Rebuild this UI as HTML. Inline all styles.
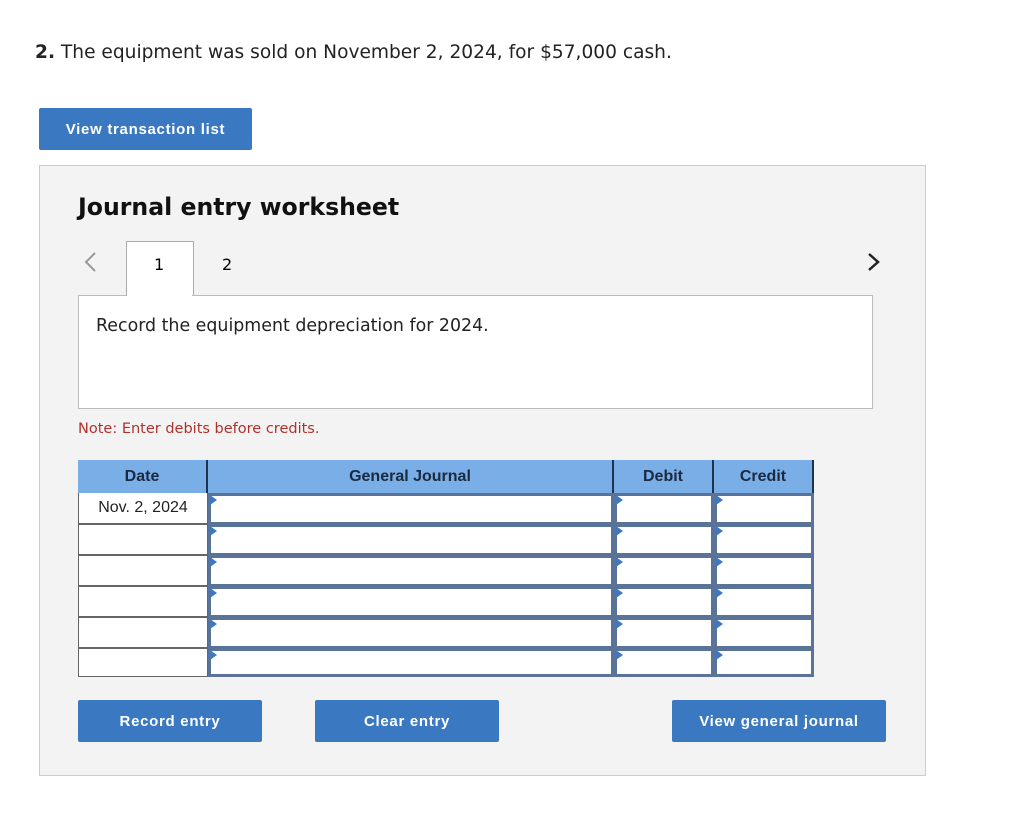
<!DOCTYPE html><html><head><style>
body{margin:0;width:1024px;height:816px;background:#fff;font-family:"Liberation Sans",sans-serif;position:relative;overflow:hidden}
.a{position:absolute}
.btn{position:absolute;background:#3a78c2;color:#fff;font-weight:bold;font-size:15px;letter-spacing:0.7px;display:flex;align-items:center;justify-content:center;border-radius:2px}
.cell{position:absolute;background:#fff;box-sizing:border-box}
.inp{position:absolute;background:#fff;box-sizing:border-box;border:3px solid #5a7399}
.tri{position:absolute;width:0;height:0;border-top:5px solid transparent;border-bottom:5px solid transparent;border-left:7px solid #3f78c0}
.h{position:absolute;background:#7aaee6;color:#1a2a40;font-weight:bold;font-size:16px;display:flex;align-items:center;justify-content:center;box-sizing:border-box;border-right:2px solid #1d3350;top:460px;height:33px}
.dv{font-family:"DejaVu Sans",sans-serif}
</style></head><body>
<div class="a dv" style="left:35px;top:42px;font-size:18.6px;color:#222"><b>2.</b> The equipment was sold on November 2, 2024, for $57,000 cash.</div>
<div class="btn" style="left:39px;top:108px;width:213px;height:42px">View transaction list</div>
<div class="a" style="left:39px;top:165px;width:885px;height:609px;background:#f3f3f3;border:1px solid #ccc"></div>
<div class="a dv" style="left:78px;top:193px;font-size:23.6px;font-weight:bold;color:#111">Journal entry worksheet</div>
<svg class="a" style="left:82px;top:251px" width="16" height="22"><path d="M13 2 L4 11 L13 20" fill="none" stroke="#999" stroke-width="2"/></svg>
<svg class="a" style="left:866px;top:252px" width="16" height="20"><path d="M3 2 L12 10 L3 18" fill="none" stroke="#222" stroke-width="2.5"/></svg>
<div class="a" style="left:126px;top:241px;width:66px;height:60px;background:#fff;border:1px solid #aaa;border-bottom:none"></div>
<div class="a dv" style="left:154px;top:255px;font-size:16px">1</div>
<div class="a dv" style="left:222px;top:255px;font-size:16px">2</div>
<div class="a" style="left:78px;top:295px;width:793px;height:112px;background:#fff;border:1px solid #bbb"></div>
<div class="a" style="left:127px;top:294px;width:65px;height:3px;background:#fff"></div>
<div class="a dv" style="left:96px;top:316px;font-size:17.4px;color:#222">Record the equipment depreciation for 2024.</div>
<div class="a dv" style="left:78px;top:421px;font-size:14.5px;color:#b0312c">Note: Enter debits before credits.</div>
<div class="a" style="left:78px;top:460px;width:736px;height:217px;background:#666"></div>
<div class="h" style="left:78px;width:130px">Date</div>
<div class="h" style="left:208px;width:406px">General Journal</div>
<div class="h" style="left:614px;width:100px">Debit</div>
<div class="h" style="left:714px;width:100px">Credit</div>
<div class="cell" style="left:79px;top:493px;width:128px;height:30px;font-size:16px;display:flex;align-items:center;justify-content:center;color:#222">Nov. 2, 2024</div>
<div class="cell" style="left:79px;top:525px;width:128px;height:29px"></div>
<div class="cell" style="left:79px;top:556px;width:128px;height:29px"></div>
<div class="cell" style="left:79px;top:587px;width:128px;height:29px"></div>
<div class="cell" style="left:79px;top:618px;width:128px;height:29px"></div>
<div class="cell" style="left:79px;top:649px;width:128px;height:27px"></div>
<div id="rows"></div>
<script>
var h='';var tops=[493,524,555,586,617,648];
tops.forEach(function(t){[[208,406],[614,100],[714,100]].forEach(function(c){
h+='<div class="inp" style="left:'+c[0]+'px;top:'+t+'px;width:'+c[1]+'px;height:'+(t==648?29:32)+'px"></div><div class="tri" style="left:'+(c[0]+2)+'px;top:'+(t+2)+'px"></div>';});});
document.getElementById('rows').innerHTML=h;
</script>
<div class="btn" style="left:78px;top:700px;width:184px;height:42px">Record entry</div>
<div class="btn" style="left:315px;top:700px;width:184px;height:42px">Clear entry</div>
<div class="btn" style="left:672px;top:700px;width:214px;height:42px">View general journal</div>
</body></html>
